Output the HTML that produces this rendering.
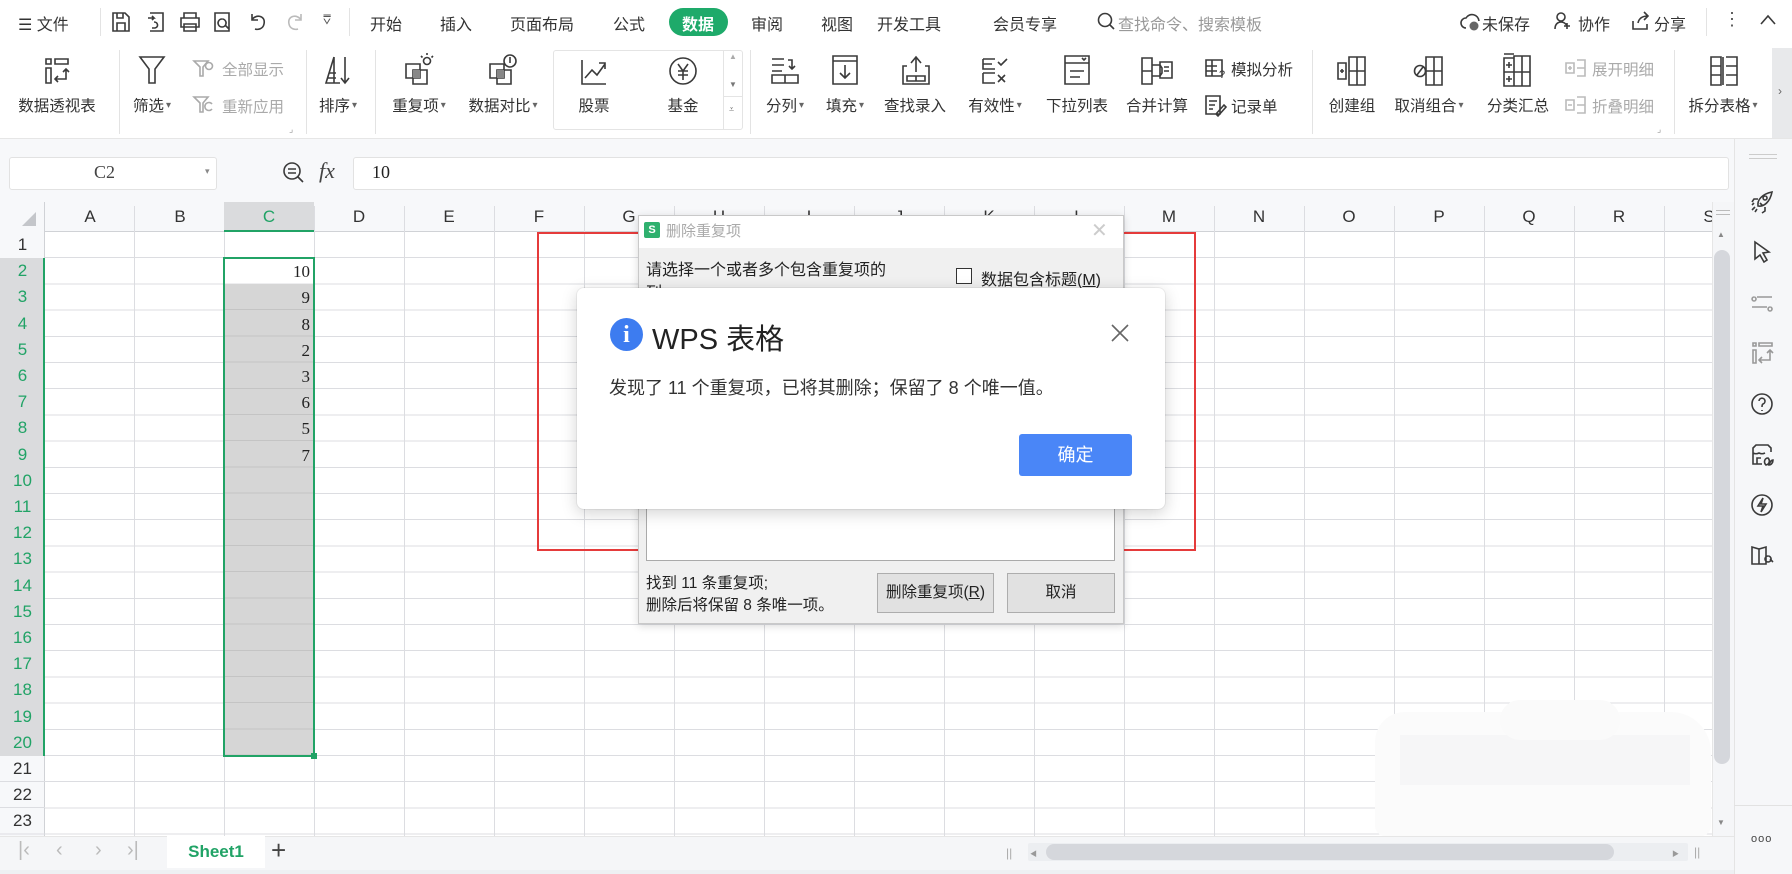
<!DOCTYPE html>
<html><head><meta charset="utf-8">
<style>
*{margin:0;padding:0;box-sizing:border-box}
body{width:1792px;height:874px;overflow:hidden;position:relative;background:#fff;font-family:"Liberation Sans","Noto Sans CJK SC",sans-serif;color:#333}
.a{position:absolute;white-space:nowrap}
.c{position:absolute;white-space:nowrap;transform:translateX(-50%)}
.tab{font-size:16px;top:11px;color:#333}
.lbl{font-size:15.5px;top:94px;color:#333}
.sm{font-size:15.5px;color:#333}
.dis{color:#aaa}
svg{position:absolute;overflow:visible}
.ic{stroke:#3a3a3a;fill:none;stroke-width:1.6}
.dd::after{content:"▾";font-size:10px;margin-left:2px;color:#666;vertical-align:3px}
.sep{position:absolute;width:1px;background:#e3e3e3}
.rh{position:absolute;left:0;width:45px;text-align:center;font-size:17px;color:#333;height:26.2px;line-height:26px}
.ch{position:absolute;top:202px;width:90px;text-align:center;font-size:17px;color:#333;line-height:30px}
.num{position:absolute;left:224px;width:86px;text-align:right;font-family:"Liberation Serif",serif;font-size:17px;height:26px;line-height:27px;color:#222}
.sb{position:absolute;left:1750px;width:24px;height:24px}
</style></head><body>

<!-- top tab bar -->
<div class="a" style="left:0;top:0;width:1792px;height:43px;background:#fff"></div>
<div class="a tab" style="left:18px">☰ 文件</div>
<div class="sep" style="left:100px;top:8px;height:28px"></div>
<svg style="left:111px;top:11px" width="20" height="22"><path class="ic" d="M2 2h12l4 4v14H2z M6 12h8v8H6z M6 2v5h6V2"/></svg>
<svg style="left:146px;top:11px" width="20" height="22"><path class="ic" d="M4 2h13v18H4 M2 7h6l-2-2m2 2-2 2 M8 11c4 0 5 5 1 6h-3"/></svg>
<svg style="left:179px;top:11px" width="22" height="22"><path class="ic" d="M5 7V2h12v5 M2 7h18v9H2z M5 13h12v7H5z"/></svg>
<svg style="left:213px;top:11px" width="20" height="22"><path class="ic" d="M2 2h14v18H2z M9 8a4 4 0 1 0 .1 0 M12 14l4 4"/></svg>
<svg style="left:248px;top:11px" width="20" height="22"><path class="ic" d="M4 3v6h6 M4 9c3-6 14-5 12 4-1 5-6 6-9 5"/></svg>
<svg style="left:285px;top:11px" width="20" height="22"><path class="ic" style="stroke:#bbb" d="M16 3v6h-6 M16 9c-3-6-14-5-12 4 1 5 6 6 9 5"/></svg>
<div class="a" style="left:323px;top:12px;font-size:13px;color:#555">⩢</div>
<div class="sep" style="left:349px;top:8px;height:28px"></div>
<div class="c tab" style="left:386px">开始</div>
<div class="c tab" style="left:456px">插入</div>
<div class="c tab" style="left:542px">页面布局</div>
<div class="c tab" style="left:629px">公式</div>
<div class="a" style="left:669px;top:8px;width:59px;height:28px;border-radius:14px;background:#1eaa6a"></div>
<div class="c tab" style="left:698px;color:#fff;font-weight:bold">数据</div>
<div class="c tab" style="left:767px">审阅</div>
<div class="c tab" style="left:837px">视图</div>
<div class="c tab" style="left:909px">开发工具</div>
<div class="c tab" style="left:1025px">会员专享</div>
<svg style="left:1097px;top:12px" width="20" height="20"><circle cx="8" cy="8" r="6.5" class="ic" stroke="#888"/><path class="ic" stroke="#888" d="M13 13l4 4"/></svg>
<div class="a tab" style="left:1118px;color:#999">查找命令、搜索模板</div>
<svg style="left:1460px;top:12px" width="22" height="20"><path class="ic" d="M6 16a5 5 0 0 1 0-10 7 7 0 0 1 13 3"/><circle cx="14" cy="14" r="4.5" fill="#666"/></svg>
<div class="a tab" style="left:1482px">未保存</div>
<svg style="left:1553px;top:11px" width="20" height="20"><circle cx="8" cy="6" r="4" class="ic"/><path class="ic" d="M2 18c0-5 3-7 6-7s5 2 6 4 M14 12v6 M11 15h6"/></svg>
<div class="a tab" style="left:1578px">协作</div>
<svg style="left:1630px;top:11px" width="20" height="20"><path class="ic" d="M3 10v8h14v-5 M8 12c1-5 5-7 10-7 M14 1l4 4-4 4"/></svg>
<div class="a tab" style="left:1654px">分享</div>
<div class="sep" style="left:1706px;top:8px;height:28px"></div>
<div class="a" style="left:1723px;top:9px;font-size:18px;color:#555">⋮</div>
<svg style="left:1760px;top:14px" width="16" height="12"><path class="ic" d="M1 10l7-8 7 8"/></svg>

<!-- ribbon -->
<div class="a" style="left:0;top:43px;width:1792px;height:96px;background:#fff;border-bottom:1px solid #e6e6e6"></div>
<div class="a" style="left:1772px;top:48px;width:20px;height:90px;background:#e8e9eb"></div>
<div class="a" style="left:1778px;top:84px;font-size:12px;color:#666">›</div>
<svg style="left:44px;top:57px" width="26" height="28"><path class="ic" d="M2 2h5v5H2z M11 2h13v5H11z M2 11h5v15H2z M22 12v10H11 M14 19l-3 3 3 3 M19 15l3-3 3 3"/></svg>
<div class="c lbl" style="left:57px">数据透视表</div>
<div class="sep" style="left:119px;top:50px;height:84px"></div>
<svg style="left:138px;top:55px" width="28" height="30"><path class="ic" d="M2 2h24L17 14v14h-6V14z"/></svg>
<div class="c lbl dd" style="left:152px">筛选</div>
<svg style="left:193px;top:59px" width="22" height="20"><path class="ic" style="stroke:#aaa" d="M1 2h14l-5 6v9H7V8z"/><circle cx="16" cy="7" r="3.5" class="ic" style="stroke:#aaa"/></svg>
<div class="a sm dis" style="left:222px;top:58px">全部显示</div>
<svg style="left:193px;top:95px" width="22" height="20"><path class="ic" style="stroke:#aaa" d="M1 2h14l-5 6v9H7V8z"/><path class="ic" style="stroke:#aaa" d="M19 9a4 4 0 1 0 0 5"/></svg>
<div class="a sm dis" style="left:222px;top:95px">重新应用</div>
<div class="a" style="left:289px;top:124px;font-size:9px;color:#999">⌟</div>
<div class="sep" style="left:306px;top:50px;height:84px"></div>
<svg style="left:324px;top:55px" width="28" height="30"><path class="ic" d="M10 2L2 28h14 M10 2v26 M5 18h7 M4 23h8 M21 2v25 M17 23l4 5 4-5"/></svg>
<div class="c lbl dd" style="left:338px">排序</div>
<div class="sep" style="left:375px;top:50px;height:84px"></div>
<svg style="left:404px;top:52px" width="30" height="34"><path class="ic" d="M2 12h14v14H2z M9 18h14v14H9z"/><circle cx="23" cy="9" r="3.5" class="ic"/><path class="ic" d="M23 1v2 M17 4l1.5 1.5 M29 4l-1.5 1.5"/><rect x="9" y="18" width="7" height="8" fill="#888"/></svg>
<div class="c lbl dd" style="left:419px">重复项</div>
<svg style="left:488px;top:52px" width="30" height="34"><path class="ic" d="M2 12h14v14H2z M9 18h14v14H9z"/><circle cx="22" cy="9" r="6" class="ic"/><path class="ic" d="M22 5v6"/><rect x="9" y="18" width="7" height="8" fill="#888"/></svg>
<div class="c lbl dd" style="left:503px">数据对比</div>
<div class="a" style="left:553px;top:50px;width:190px;height:80px;border:1px solid #e4e4e4;border-radius:3px"></div>
<svg style="left:580px;top:58px" width="28" height="28"><path class="ic" d="M2 2v24h24 M5 20l7-8 5 5 8-11 M19 5h6v6"/></svg>
<div class="c lbl" style="left:594px">股票</div>
<svg style="left:668px;top:56px" width="30" height="30"><circle cx="15" cy="15" r="13" class="ic"/><path class="ic" d="M10 8l5 7 5-7 M15 15v9 M10 15h10 M10 19h10"/></svg>
<div class="c lbl" style="left:683px">基金</div>
<div class="a" style="left:723px;top:50px;width:1px;height:80px;background:#e4e4e4"></div>
<div class="a" style="left:723px;top:96px;width:20px;height:1px;background:#e4e4e4"></div>
<div class="a" style="left:729px;top:52px;font-size:8px;color:#aaa">▲</div>
<div class="a" style="left:729px;top:80px;font-size:8px;color:#777">▼</div>
<div class="a" style="left:729px;top:104px;font-size:9px;color:#777">⩡</div>
<div class="sep" style="left:750px;top:50px;height:84px"></div>
<svg style="left:770px;top:56px" width="30" height="30"><path class="ic" d="M2 3h12 M2 9h12 M2 15h10 M18 4h4v8 M19 10l3 3 3-3 M2 19h26v8H2z M15 19v8"/></svg>
<div class="c lbl dd" style="left:785px">分列</div>
<svg style="left:831px;top:54px" width="28" height="32"><path class="ic" d="M2 2h24v28H2z M2 7h24 M14 11v13 M9 19l5 5 5-5"/></svg>
<div class="c lbl dd" style="left:845px">填充</div>
<svg style="left:901px;top:54px" width="30" height="32"><path class="ic" d="M6 12H2v18h26V12h-4 M15 4v14 M10 9l5-6 5 6 M6 22h18v5H6z M15 22v5"/></svg>
<div class="c lbl" style="left:915px">查找录入</div>
<svg style="left:981px;top:57px" width="28" height="28"><path class="ic" d="M2 2h12 M2 2v10h12 M2 7h9 M2 16h12 M2 16v10h12 M17 5l3 3 6-6 M17 18l7 7 M24 18l-7 7"/></svg>
<div class="c lbl dd" style="left:995px">有效性</div>
<svg style="left:1063px;top:54px" width="28" height="32"><path class="ic" d="M2 2h24v28H2z M2 9h24 M19 4l2 2 2-2 M7 17h14 M7 23h10"/></svg>
<div class="c lbl" style="left:1077px">下拉列表</div>
<svg style="left:1140px;top:56px" width="34" height="30"><path class="ic" d="M2 2h10v26H2z M2 15h10 M12 9h8l2 3v5l-2 3h-8 M20 6h12v16H20z M24 11h5 M24 15h5"/></svg>
<div class="c lbl" style="left:1157px">合并计算</div>
<svg style="left:1204px;top:58px" width="24" height="22"><path class="ic" d="M2 2h16v16H2z M2 8h11 M2 13h11 M8 2v16"/><text x="15" y="20" font-size="11" fill="#333" font-family="Liberation Sans">?</text></svg>
<div class="a sm" style="left:1231px;top:58px">模拟分析</div>
<svg style="left:1204px;top:94px" width="24" height="22"><path class="ic" d="M2 2h14v18H2z M5 7h8 M5 11h6 M5 15h4 M12 20l8-9 2 2-8 9z"/></svg>
<div class="a sm" style="left:1231px;top:95px">记录单</div>
<div class="sep" style="left:1312px;top:50px;height:84px"></div>
<svg style="left:1336px;top:55px" width="32" height="32"><path class="ic" d="M2 8h8v16H2z M13 2h16v28H13z M13 16h16 M21 2v28 M4 16h4 M6 14v4"/></svg>
<div class="c lbl" style="left:1352px">创建组</div>
<svg style="left:1413px;top:55px" width="32" height="32"><circle cx="7" cy="16" r="5.5" class="ic"/><path class="ic" d="M4 20l6-8 M13 2h16v28H13z M13 16h16 M21 2v28"/></svg>
<div class="c lbl dd" style="left:1429px">取消组合</div>
<svg style="left:1502px;top:52px" width="32" height="36"><path class="ic" d="M2 6h10v28H2z M2 20h10 M12 4h16v30H12z M12 20h16 M20 4v30 M4 13h6 M7 10v6 M4 27h6 M7 24v6 M2 2h10"/></svg>
<div class="c lbl" style="left:1518px">分类汇总</div>
<svg style="left:1565px;top:58px" width="22" height="20"><path class="ic" style="stroke:#bbb" d="M1 5h8v10H1z M3 10h4 M5 8v4 M12 2h8v16h-8 M12 10h8"/></svg>
<div class="a sm dis" style="left:1592px;top:58px">展开明细</div>
<svg style="left:1565px;top:95px" width="22" height="20"><path class="ic" style="stroke:#bbb" d="M1 5h8v10H1z M3 10h4 M12 2h8v16h-8 M12 10h8"/></svg>
<div class="a sm dis" style="left:1592px;top:95px">折叠明细</div>
<div class="a" style="left:1657px;top:124px;font-size:9px;color:#999">⌟</div>
<div class="sep" style="left:1674px;top:50px;height:84px"></div>
<svg style="left:1709px;top:55px" width="30" height="32"><path class="ic" d="M2 2h10v28H2z M2 11h10 M2 20h10 M17 2h11v28H17 M17 11h11 M17 20h11 M14 2v28"/></svg>
<div class="c lbl dd" style="left:1723px">拆分表格</div>

<!-- formula bar area -->
<div class="a" style="left:0;top:139px;width:1734px;height:63px;background:#f7f8fa"></div>
<div class="a" style="left:9px;top:157px;width:208px;height:33px;background:#fff;border:1px solid #e2e2e2;border-radius:3px"></div>
<div class="a" style="left:94px;top:162px;font-family:'Liberation Serif',serif;font-size:18px;color:#444">C2</div>
<div class="a" style="left:205px;top:166px;font-size:9px;color:#888">▾</div>
<svg style="left:282px;top:161px" width="24" height="24"><circle cx="10" cy="10" r="8" class="ic"/><path class="ic" d="M6 8h8 M6 12h8 M16 16l5 5"/></svg>
<div class="a" style="left:319px;top:158px;font-family:'Liberation Serif',serif;font-style:italic;font-size:22px;color:#444">fx</div>
<div class="a" style="left:353px;top:157px;width:1376px;height:33px;background:#fff;border:1px solid #e2e2e2;border-radius:3px"></div>
<div class="a" style="left:372px;top:162px;font-family:'Liberation Serif',serif;font-size:18px;color:#222">10</div>

<!-- grid -->
<div class="a" style="left:0;top:202px;width:1712px;height:634px;overflow:hidden;background:#fff">
 <div class="a" style="left:0;top:0;width:1712px;height:30px;background:#f7f8fa;border-bottom:1px solid #d0d2d6"></div>
 <div class="a" style="left:0;top:0;width:45px;height:634px;background:#f7f8fa;border-right:1px solid #d0d2d6"></div>
 <div class="a" style="left:45px;top:30px;width:1667px;height:604px;background:repeating-linear-gradient(to right,transparent 0,transparent 89px,#dcdde1 89px,#dcdde1 90px),repeating-linear-gradient(to bottom,transparent 0,transparent 25.2px,#dcdde1 25.2px,#dcdde1 26.2px)"></div>
 <div class="a" style="left:45px;top:4px;width:1667px;height:26px;background:repeating-linear-gradient(to right,transparent 0,transparent 89px,#dcdde1 89px,#dcdde1 90px)"></div>
 <div class="a" style="left:0;top:56px;width:45px;height:578px;background:repeating-linear-gradient(to bottom,transparent 0,transparent 25.2px,#dcdde1 25.2px,#dcdde1 26.2px)"></div>
 <svg style="left:20px;top:8px" width="18" height="18"><path d="M16 2v14H2z" fill="#c4c6ca"/></svg>
</div>
<div class="a" style="left:224px;top:202px;width:90px;height:30px;background:#dadbdd;border-bottom:2px solid #21a366"></div>
<div class="a" style="left:0;top:258px;width:45px;height:498px;background:#dadbdd;border-right:2px solid #21a366"></div>
<div class="ch" style="left:45px">A</div><div class="ch" style="left:135px">B</div><div class="ch" style="left:224px;color:#21a366">C</div><div class="ch" style="left:314px">D</div><div class="ch" style="left:404px">E</div><div class="ch" style="left:494px">F</div><div class="ch" style="left:584px">G</div><div class="ch" style="left:674px">H</div><div class="ch" style="left:764px">I</div><div class="ch" style="left:854px">J</div><div class="ch" style="left:944px">K</div><div class="ch" style="left:1034px">L</div><div class="ch" style="left:1124px">M</div><div class="ch" style="left:1214px">N</div><div class="ch" style="left:1304px">O</div><div class="ch" style="left:1394px">P</div><div class="ch" style="left:1484px">Q</div><div class="ch" style="left:1574px">R</div><div class="ch" style="left:1664px">S</div>
<div class="rh" style="top:232px">1</div>
<div class="rh" style="top:258.2px;color:#21a366">2</div>
<div class="rh" style="top:284.4px;color:#21a366">3</div>
<div class="rh" style="top:310.6px;color:#21a366">4</div>
<div class="rh" style="top:336.8px;color:#21a366">5</div>
<div class="rh" style="top:363px;color:#21a366">6</div>
<div class="rh" style="top:389.2px;color:#21a366">7</div>
<div class="rh" style="top:415.4px;color:#21a366">8</div>
<div class="rh" style="top:441.6px;color:#21a366">9</div>
<div class="rh" style="top:467.8px;color:#21a366">10</div>
<div class="rh" style="top:494px;color:#21a366">11</div>
<div class="rh" style="top:520.2px;color:#21a366">12</div>
<div class="rh" style="top:546.4px;color:#21a366">13</div>
<div class="rh" style="top:572.6px;color:#21a366">14</div>
<div class="rh" style="top:598.8px;color:#21a366">15</div>
<div class="rh" style="top:625px;color:#21a366">16</div>
<div class="rh" style="top:651.2px;color:#21a366">17</div>
<div class="rh" style="top:677.4px;color:#21a366">18</div>
<div class="rh" style="top:703.6px;color:#21a366">19</div>
<div class="rh" style="top:729.8px;color:#21a366">20</div>
<div class="rh" style="top:756px">21</div>
<div class="rh" style="top:782.2px">22</div>
<div class="rh" style="top:808.4px">23</div>
<div class="a" style="left:224px;top:284.4px;width:90px;height:472px;background:#d6d6d6;background-image:repeating-linear-gradient(to bottom,transparent 0,transparent 25.2px,#c4c4c4 25.2px,#c4c4c4 26.2px)"></div>
<div class="a" style="left:223px;top:257px;width:92px;height:500px;border:2px solid #21a366"></div>
<div class="a" style="left:311px;top:753px;width:6px;height:6px;background:#21a366"></div>
<div class="num" style="top:258.2px">10</div>
<div class="num" style="top:284.4px">9</div>
<div class="num" style="top:310.6px">8</div>
<div class="num" style="top:336.8px">2</div>
<div class="num" style="top:363px">3</div>
<div class="num" style="top:389.2px">6</div>
<div class="num" style="top:415.4px">5</div>
<div class="num" style="top:441.6px">7</div>

<!-- blurred watermark -->
<div class="a" style="left:1375px;top:712px;width:336px;height:124px;background:#fbfbfb;border-radius:30px 40px 10px 10px"></div>
<div class="a" style="left:1400px;top:735px;width:290px;height:50px;background:#f6f6f7"></div>
<div class="a" style="left:1500px;top:700px;width:120px;height:40px;background:#fafafa;border-radius:20px"></div>

<!-- vertical scrollbar -->
<div class="a" style="left:1712px;top:202px;width:22px;height:634px;background:#f5f6f8;border-left:1px solid #e6e6e6"></div>
<div class="a" style="left:1716px;top:210px;width:14px;height:1px;background:#bbb"></div>
<div class="a" style="left:1716px;top:214px;width:14px;height:1px;background:#bbb"></div>
<div class="a" style="left:1717px;top:230px;font-size:8px;color:#888">▲</div>
<div class="a" style="left:1714px;top:250px;width:16px;height:514px;background:#d5d7dc;border-radius:8px"></div>
<div class="a" style="left:1717px;top:818px;font-size:8px;color:#888">▼</div>

<!-- right sidebar -->
<div class="a" style="left:1734px;top:139px;width:58px;height:735px;background:#f6f7f9;border-left:1px solid #e4e4e4"></div>
<div class="a" style="left:1749px;top:154px;width:28px;height:1px;background:#ccc"></div>
<div class="a" style="left:1749px;top:158px;width:28px;height:1px;background:#ccc"></div>
<svg class="sb" style="top:190px"><path class="ic" d="M8 16c-1-6 4-12 14-14-2 10-8 15-14 14z M10 13l3 3 M15 6a2 2 0 1 0 .1 0 M5 17l-3 3 M7 19l-2 3 M4 13l-2 2 M8 9H4l-2 3 M15 17v4l-3 2"/></svg>
<svg class="sb" style="top:240px"><path class="ic" d="M5 2l14 10-6 1 4 7-3 2-4-7-5 4z"/></svg>
<svg class="sb" style="top:290px"><path class="ic" style="stroke:#999" d="M7 7h15 M2 17h15 M4 7a2 2 0 1 0 .1 0 M20 17a2 2 0 1 0 .1 0"/></svg>
<svg class="sb" style="top:341px"><path class="ic" style="stroke:#999" d="M3 2h3v3H3z M9 2h13v3H9z M3 9h3v13H3z M20 10v9h-10 M12 16l-3 3 3 3 M17 12l3-3 3 3"/></svg>
<svg class="sb" style="top:392px"><circle cx="12" cy="12" r="10" class="ic"/><path class="ic" d="M9 9a3 3 0 1 1 4 3c-1 .5-1 1.5-1 3 M12 18v1"/></svg>
<svg class="sb" style="top:443px"><path class="ic" d="M3 10V5l3-3h12l3 3v4 M3 10v11h9 M3 10c2 1 4 1 6 0 2 1 4 1 6 0 M7 21v-6h4 M16 22c-3-3-1-7 2-7 2 2 2 6-2 7z M19 22c1-4 3-5 4-5 0 3-2 5-4 5z"/></svg>
<svg class="sb" style="top:493px"><circle cx="12" cy="12" r="10" class="ic"/><path class="ic" d="M13 5l-5 8h5l-2 6 5-8h-5z"/></svg>
<svg class="sb" style="top:543px"><path class="ic" d="M2 4l7 2 7-2v17H2z M9 6v15 M18 13a3 3 0 1 0 .1 0 M20 16l3 3"/></svg>
<div class="a" style="left:1734px;top:805px;width:58px;height:1px;background:#e2e2e2"></div>
<div class="a" style="left:1751px;top:833px;font-size:11px;color:#444;letter-spacing:1px">ooo</div>

<!-- bottom sheet bar -->
<div class="a" style="left:0;top:836px;width:1734px;height:38px;background:#f5f6f8;border-top:1px solid #e6e6e6"></div>
<div class="a" style="left:0;top:870px;width:1734px;height:4px;background:#eef0f3"></div>
<div class="a" style="left:18px;top:839px;font-size:20px;color:#bbb">|‹</div>
<div class="a" style="left:56px;top:839px;font-size:20px;color:#bbb">‹</div>
<div class="a" style="left:95px;top:839px;font-size:20px;color:#bbb">›</div>
<div class="a" style="left:127px;top:839px;font-size:20px;color:#bbb">›|</div>
<div class="a" style="left:167px;top:836px;width:98px;height:32px;background:#fff"></div>
<div class="c" style="left:216px;top:842px;font-size:17px;font-weight:bold;color:#21a366">Sheet1</div>
<div class="a" style="left:271px;top:835px;font-size:26px;color:#444;font-weight:300">+</div>
<div class="a" style="left:1006px;top:846px;font-size:12px;color:#aaa">||</div>
<div class="a" style="left:1028px;top:843px;width:660px;height:18px;background:#eceef1;border-radius:2px"></div>
<div class="a" style="left:1030px;top:849px;font-size:7px;color:#999">◀</div>
<div class="a" style="left:1046px;top:844px;width:568px;height:16px;background:#d5d7dc;border-radius:8px"></div>
<div class="a" style="left:1672px;top:849px;font-size:7px;color:#999">▶</div>
<div class="a" style="left:1694px;top:845px;font-size:12px;color:#aaa">||</div>

<!-- red rect -->
<div class="a" style="left:537px;top:232px;width:659px;height:319px;border:2px solid #e53b3b"></div>

<!-- background dialog -->
<div class="a" style="left:638px;top:215px;width:486px;height:409px;background:#f0f0f0;border:1px solid #c9c9c9;box-shadow:0 2px 8px rgba(0,0,0,.15)"></div>
<div class="a" style="left:639px;top:216px;width:484px;height:32px;background:#fff"></div>
<div class="a" style="left:644px;top:222px;width:16px;height:16px;background:#2fb06e;border-radius:2px;color:#fff;font-size:11px;text-align:center;line-height:16px;font-weight:bold">S</div>
<div class="a" style="left:666px;top:220px;font-size:15px;color:#aaa">删除重复项</div>
<div class="a" style="left:1091px;top:218px;font-size:20px;color:#ccc">✕</div>
<div class="a" style="left:646px;top:256px;font-size:16px;color:#222">请选择一个或者多个包含重复项的</div>
<div class="a" style="left:646px;top:279px;font-size:16px;color:#222">列</div>
<div class="a" style="left:956px;top:268px;width:16px;height:16px;border:1px solid #333;background:#fff"></div>
<div class="a" style="left:981px;top:266px;font-size:16px;color:#222">数据包含标题(<u>M</u>)</div>
<div class="a" style="left:646px;top:509px;width:469px;height:52px;background:#fff;border:1px solid #aaa;border-top:none"></div>
<div class="a" style="left:646px;top:571px;font-size:15.5px;color:#222">找到 11 条重复项;</div>
<div class="a" style="left:646px;top:593px;font-size:15.5px;color:#222">删除后将保留 8 条唯一项。</div>
<div class="a" style="left:877px;top:573px;width:117px;height:40px;background:#e1e1e1;border:1px solid #adadad;text-align:center;line-height:38px;font-size:15.5px;color:#222">删除重复项(<u>R</u>)</div>
<div class="a" style="left:1007px;top:573px;width:108px;height:40px;background:#e1e1e1;border:1px solid #adadad;text-align:center;line-height:38px;font-size:15.5px;color:#222">取消</div>

<!-- foreground dialog -->
<div class="a" style="left:577px;top:288px;width:588px;height:221px;background:#fff;border-radius:7px;box-shadow:0 4px 16px rgba(0,0,0,.18),0 0 0 1px rgba(0,0,0,.05)"></div>
<div class="a" style="left:610px;top:318px;width:33px;height:33px;border-radius:50%;background:#3d7cf0;color:#fff;font-family:'Liberation Serif',serif;font-weight:bold;font-size:24px;text-align:center;line-height:34px">i</div>
<div class="a" style="left:652px;top:316px;font-size:29px;color:#222">WPS 表格</div>
<svg style="left:1110px;top:323px" width="20" height="20"><path d="M2 2l16 16M18 2L2 18" stroke="#666" stroke-width="1.6"/></svg>
<div class="a" style="left:609px;top:374px;font-size:18px;color:#333">发现了 11 个重复项，已将其删除；保留了 8 个唯一值。</div>
<div class="a" style="left:1019px;top:434px;width:113px;height:42px;background:#4a86f7;border-radius:3px;color:#fff;font-size:18px;text-align:center;line-height:42px">确定</div>
</body></html>
